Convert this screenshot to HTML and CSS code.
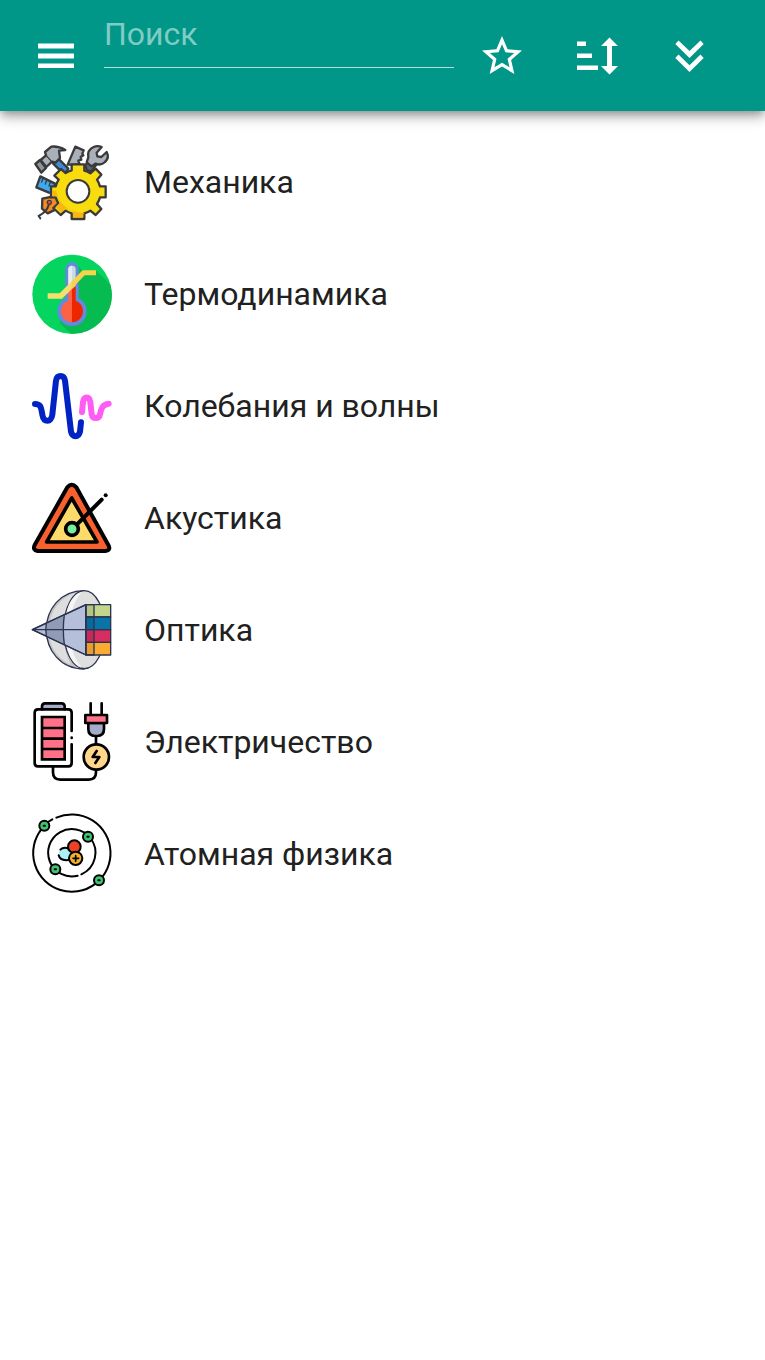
FILE: index.html
```
<!DOCTYPE html>
<html lang="ru">
<head>
    <meta charset="UTF-8">
    <meta name="viewport" content="width=device-width,initial-scale=1.0">
    <title>Физика</title>
    <link rel="stylesheet" href="styles.css">
</head>
<body>
    <header class="bar">
        <button class="bar-btn bar-btn_menu" type="button" aria-label="Меню">
            <svg class="bar-icon" viewBox="0 0 24 24"><path d="M3 18h18v-2.300H3zM3 13.200h18v-2.400H3zM3 5.800v2.400h18V5.800z"/></svg>
        </button>
        <input class="bar-search" type="text" placeholder="Поиск" aria-label="Поиск">
        <button class="bar-btn" type="button" aria-label="Избранное">
            <svg class="bar-icon" viewBox="0 0 24 24"><path d="M22 9.240l-7.190-.620L12 2 9.190 8.630 2 9.240l5.460 4.730L5.820 21 12 17.270 18.180 21l-1.630-7.030zM12 15.400l-3.760 2.270 1-4.280-3.320-2.880 4.380-.380L12 6.100l1.710 4.040 4.380.380-3.320 2.880 1 4.280z"/></svg>
        </button>
        <button class="bar-btn" type="button" aria-label="Сортировка">
            <svg class="bar-icon" viewBox="0 0 48 48"><path d="M3 9.500h9V14H3zM3 21.500h15V26H3zM3 33.500h21V38H3zM35.500 5.500l8.500 8.500h-6v20h6l-8.500 8.500L27 34h6V14h-6z"/></svg>
        </button>
        <button class="bar-btn bar-btn_last" type="button" aria-label="Развернуть">
            <svg class="bar-icon" viewBox="0 0 48 48"><path d="M12.500 8.500L23.500 19l11-10.500 3.200 3.400L23.500 26 9.300 11.900zM12.500 22.500l11 10.700 11-10.700 3.200 3.400L23.500 40 9.300 25.900z"/></svg>
        </button>
    </header>

    <main>
        <ul class="list">
            <li>
                <a class="list-item" href="#mechanics">
                    <svg class="list-icon" viewBox="21 14 240 240" stroke="#3a3a3c" stroke-width="7" stroke-linejoin="round" stroke-linecap="round">
                        <!-- hammer -->
                        <path fill="#3f8bd8" d="M84 78l16-14 30 30-8 13-14-5z"/>
                        <path fill="#8d949c" d="M31 80l14-12 18 24-14 14z"/>
                        <path fill="#a9b0b7" d="M47 68l16-14-3-10 19-16q20-3 42 10l-19 2 3 22-13 14-11-3-17 16z"/>
                        <path fill="none" stroke-width="4" d="M63 54l19 21"/>
                        <!-- saw -->
                        <path fill="#a9b0b7" d="M128 82l23-54 25 11-4 10 3 5-8 5 2 8-9 3 3 9-8 3z"/>
                        <!-- wrench -->
                        <path fill="#5d646d" d="M181 83l20-18 16 13-18 24-14-4z"/>
                        <path fill="#a9b0b7" d="M190 60q-4-22 16-31 12-5 24 0l-15 17 2 11 12 2 16-15q9 18-5 30-13 12-29 5l-11 8-15-12z"/>
                        <!-- ruler -->
                        <path fill="#3fa9ef" d="M46 117l44 22-4 28-14-1-38-16z"/>
                        <path fill="none" stroke-width="4" d="M54 123l-4 11M65 129l-4 11M76 135l-4 11"/>
                        <!-- tag -->
                        <path fill="#f58a23" d="M52 184l40-8 14 26-9 12-29 14-17-14z"/>
                        <circle cx="73" cy="195" r="6" fill="#e65252" stroke-width="4"/>
                        <path fill="none" stroke-width="6" d="M71 203q-5 20-30 33l5 7"/>
                        <!-- gear -->
                        <path fill="#f8dc0d" d="M140 81h38v19q10 3 18 8l16-14 17 18-13 15q6 9 9 20h17v33h-17q-3 11-9 20l13 15-17 18-16-13q-8 5-18 8v17h-38v-17q-11-3-18-8l-15 13-22-21 15-14q-5-9-8-18H78v-33h14q3-11 9-20l-13-12 20-20 14 12q8-5 18-8z"/>
                        <path fill="#fbb414" stroke="none" d="M82 160h12q8 60 86 68l-5 1v10h-31v-17l-22-9-14 12-16-16 13-13-9-19H82z"/>
                        <circle cx="159" cy="162" r="34" fill="#fff" stroke-width="6"/>
                    </svg>
                    <span class="list-text">Механика</span>
                </a>
            </li>
            <li>
                <a class="list-item" href="#thermodynamics">
                    <svg class="list-icon" viewBox="21 20 240 240">
                        <circle cx="141" cy="141" r="119" fill="#05d55e"/>
                        <path fill="#06bb4f" d="M154 52l32 29 27-11 43 41q17 65-27 109-38 43-93 38l-31-30 5-44z"/>
                        <path fill="#6687e2" d="M121 65a20 20 0 0 1 40 0v88q24 13 24 39a44 44 0 0 1-88 0q0-26 24-39z"/>
                        <path fill="#c9dce0" d="M130 66a11 11 0 0 1 22 0v53l-22 22z"/>
                        <path fill="#e7ecef" d="M130 66q1-10 11-11v68l-11 11z"/>
                        <path fill="#ee2600" d="M152 115v45q22 9 22 32a33 33 0 0 1-33 33V125z"/>
                        <path fill="#ff6243" d="M130 132l11-10v103a33 33 0 0 1-33-33q0-23 22-32z"/>
                        <path fill="#f5df6d" d="M68 138h36l36-36v24l-29 28H68z"/>
                        <path fill="#f4d44b" d="M139 103l34-34h40v15h-34l-40 42z"/>
                    </svg>
                    <span class="list-text">Термодинамика</span>
                </a>
            </li>
            <li>
                <a class="list-item" href="#waves">
                    <svg class="list-icon" viewBox="21 19 240 240" fill="none" stroke-width="18" stroke-linecap="round" stroke-linejoin="round">
                        <path stroke="#0024c4" d="M30 133c18 0 18 10 22 32 4 24 27 24 30 0L93 63c3-19 24-19 27 0l18 153c4 18 23 18 27 0l3-28"/>
                        <path stroke="#ff5cf4" d="M171 157l3-30c3-18 19-18 22 0l4 37c3 15 22 15 25 0 4-19 8-30 26-32"/>
                    </svg>
                    <span class="list-text">Колебания и волны</span>
                </a>
            </li>
            <li>
                <a class="list-item" href="#acoustics">
                    <svg class="list-icon" viewBox="21 24 240 240" stroke="#000" stroke-width="12" stroke-linejoin="round" stroke-linecap="round">
                        <path fill="#f9602e" d="M127 52q13-16 27 0l96 173q9 16-9 18H38q-16-3-9-18z"/>
                        <path fill="#fddb6b" stroke-width="11" d="M140 84L65 216h151z"/>
                        <path fill="none" d="M150 169l80-80"/>
                        <circle cx="141" cy="177" r="19" fill="#78ef9c" stroke-width="11"/>
                        <path d="M242 76h.010"/>
                    </svg>
                    <span class="list-text">Акустика</span>
                </a>
            </li>
            <li>
                <a class="list-item" href="#optics">
                    <svg class="list-icon" viewBox="21 23 240 240" stroke="#2c3550" stroke-width="4" stroke-linejoin="round">
                        <path fill="#c5c5c5" d="M178 25C105 25 64 82 64 142s41 118 114 118z"/>
                        <path fill="#dedede" stroke="none" d="M160 29C102 42 72 94 72 142s20 82 65 105q-22-42-22-105t45-113z"/>
                        <ellipse cx="178" cy="142" rx="62" ry="117" fill="#dfdfdf"/>
                        <path fill="#f5f5f5" stroke="none" d="M170 30c-35 7-51 60-51 112s18 105 51 114q-36-44-36-114t36-112z"/>
                        <path fill="#b6bfd9" d="M22 142L183 67v151z"/>
                        <path fill="#929bb5" stroke="none" d="M64 124l54-25q-5 43 0 86l-54-25z"/>
                        <path fill="none" d="M118 97q-6 44 0 90M64 122q-3 20 0 39M22 142L183 67v151z"/>
                        <path fill="#c3d68c" d="M183 67h74v37h-74z"/>
                        <path fill="#0874a8" d="M183 104h74v38h-74z"/>
                        <path fill="#d72d61" d="M183 142h74v38h-74z"/>
                        <path fill="#fcab32" d="M183 180h74v38h-74z"/>
                        <path fill="#00000014" d="M183 67h24v151h-24z"/>
                        <path fill="none" d="M22 142h235"/>
                    </svg>
                    <span class="list-text">Оптика</span>
                </a>
            </li>
            <li>
                <a class="list-item" href="#electricity">
                    <svg class="list-icon" viewBox="21 23 240 240" fill="none" stroke="#000" stroke-width="8" stroke-linejoin="round" stroke-linecap="round">
                        <path fill="#a5acc9" d="M51 45V35q1-8 9-8h50q8 0 9 8v10"/>
                        <path d="M140 110V55q0-10-10-10H39q-10 0-10 10v151q0 10 10 10h91q10 0 10-10v-56M140 130v1"/>
                        <path fill="#ff7189" stroke-linejoin="miter" d="M51 68h68v127H51zM51 101h68M51 133h68M51 164h68"/>
                        <path d="M84 217v17q0 22 22 22h85q22 0 22-22v-10M213 127v24M197 27v33M230 27v33"/>
                        <path fill="#a5acc9" d="M190 86h47v18q0 21-21 21h-5q-21 0-21-21z"/>
                        <path fill="#ff7189" d="M181 62h65v24h-65z"/>
                        <circle cx="214" cy="188" r="38" fill="#ffd78b"/>
                        <path d="M215 170l-12 18h20l-12 18"/>
                    </svg>
                    <span class="list-text">Электричество</span>
                </a>
            </li>
            <li>
                <a class="list-item" href="#atomic">
                    <svg class="list-icon" viewBox="21 22 240 240" fill="none" stroke="#000" stroke-width="6" stroke-linecap="round">
                        <path d="M94 33A116 116 0 1 1 49 68M69 46l13-8"/>
                        <path d="M158 207A71 71 0 1 1 196 94A71 71 0 0 1 169 203"/>
                        <circle cx="121" cy="142" r="20" fill="#acf0fa" stroke="none"/>
                        <path d="M106 129q9-9 24-4M101 146q4 17 29 14"/>
                        <circle cx="148" cy="120" r="19" fill="#ec4126"/>
                        <circle cx="152" cy="155" r="20" fill="#f5b12e"/>
                        <path d="M144 155h17M152 147v17" stroke-width="5"/>
                        <g fill="#3fc474">
                            <circle cx="58" cy="57" r="15"/>
                            <circle cx="189" cy="90" r="15"/>
                            <circle cx="91" cy="188" r="15"/>
                            <circle cx="222" cy="221" r="15"/>
                        </g>
                        <path d="M56 57h4M187 90h4M89 188h4M220 221h4"/>
                    </svg>
                    <span class="list-text">Атомная физика</span>
                </a>
            </li>
        </ul>
    </main>
</body>
</html>
```
FILE: styles.css
```
*{ box-sizing: border-box;}
body{ margin: 0; background: #fff; color: #212121; font: 32px/40px Roboto, "Open Sans", sans-serif;}

/*top bar*/
.bar{ position: relative; display: flex; align-items: center; height: 111px; padding: 0 31px 0 32px; background: #009688; box-shadow: 0 4px 8px -2px rgba(0,0,0,.3), 0 8px 10px rgba(0,0,0,.14), 0 2px 20px rgba(0,0,0,.12);}
.bar-btn{ flex: none; margin: 0; padding: 24px; border: 0; background: none; color: #fff; cursor: pointer;}
.bar-btn_menu{ padding: 24px 24px 24px 0;}
.bar-btn_last{ padding: 24px 20px;}
.bar-icon{ display: block; width: 48px; height: 48px; fill: currentColor;}
.bar-search{ flex: 1; align-self: flex-start; min-width: 0; height: 68px; margin: 0; padding: 0; border: 0; border-bottom: 1px solid #b2dfdb; border-radius: 0; background: none; color: #fff; font: inherit; outline: 0;}
.bar-search::placeholder{ color: #80cbc4; opacity: 1;}

/*sections*/
.list{ margin: 0; padding: 15px 0; list-style: none;}
.list-item{ display: flex; align-items: center; gap: 32px; padding: 16px 32px; color: inherit; text-decoration: none;}
.list-icon{ flex: none; width: 80px; height: 80px; overflow: visible;}
.list-text{ flex: 1; min-width: 0;}
```
